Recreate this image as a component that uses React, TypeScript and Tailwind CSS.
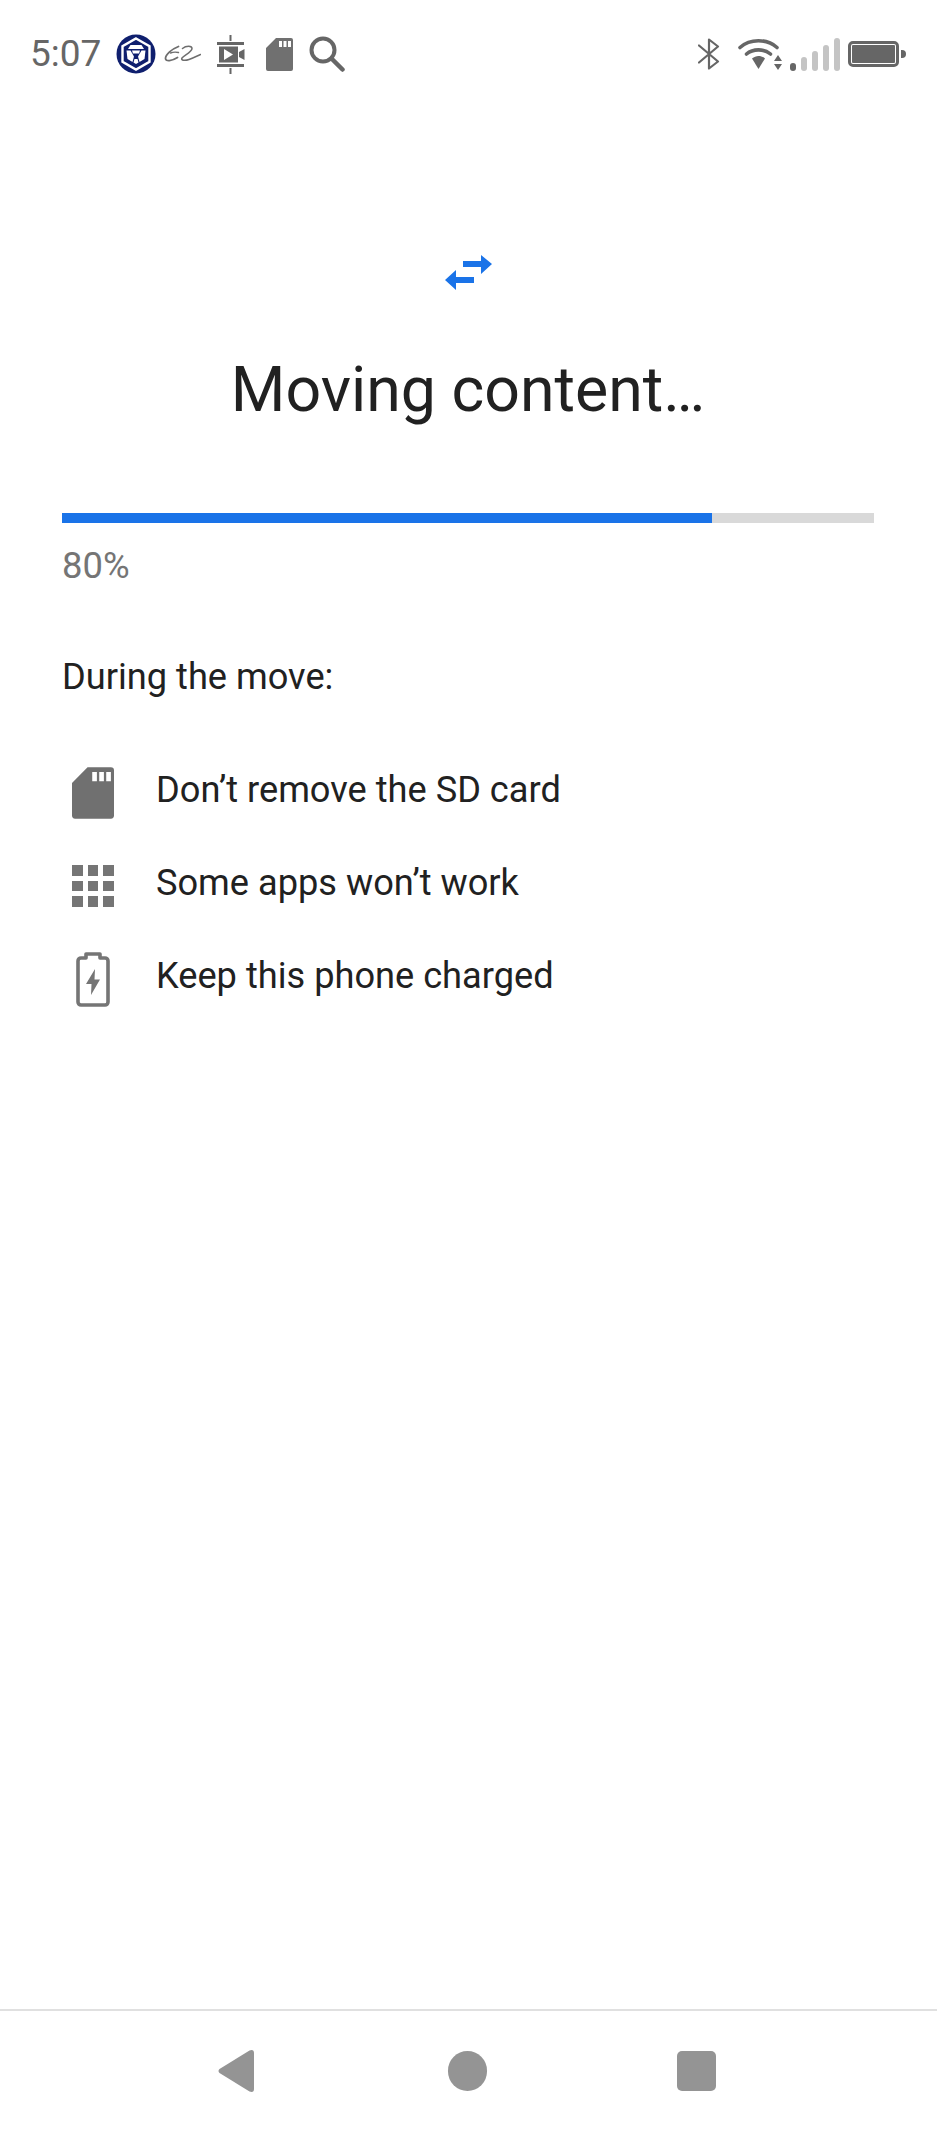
import React from 'react';

const CryptoIcon = () => (
    <svg width="40" height="40" viewBox="0 0 40 40" className="ml-[15px]">
        <circle cx="20" cy="20" r="19.5" fill="#0f1f6e" />
        <path d="M20 4.5 L33.5 12.2 V27.8 L20 35.5 L6.5 27.8 V12.2 Z" fill="none" stroke="#fff" strokeWidth="2.4" />
        <path d="M14.5 11 H25.5 L28 15 H12 Z" fill="#fff" />
        <path d="M16 16.5 H24 L23 19.5 H17 Z" fill="#fff" />
        <path d="M10.5 16.5 H14.5 L18 22.5 L16.5 28 L11.5 25 Z" fill="#fff" />
        <path d="M29.5 16.5 H25.5 L22 22.5 L23.5 28 L28.5 25 Z" fill="#fff" />
        <path d="M18.5 25 H21.5 L22.5 28.5 L20 30 L17.5 28.5 Z" fill="#fff" />
    </svg>
);

const AlibabaIcon = () => (
    <svg width="37" height="18" viewBox="0 0 37 18" fill="none" stroke="#6e6e6e" className="ml-[8px]">
        <path d="M14.5 1.5 C8 4 1.5 9.5 1.5 13.5 C1.5 17 8 16 13.5 12.5" strokeWidth="1.8" strokeLinecap="round" />
        <path d="M6.5 8 C9 7 12 7 14.5 7.5" strokeWidth="1.4" strokeLinecap="round" />
        <path d="M18.5 3.5 C22 0.5 28 0.5 28 3.5 C28 7 20 10.5 18 13 C16.5 15.5 21 16 25 14.5 C29 13 33 11 36.5 9.5" strokeWidth="1.5" strokeLinecap="round" />
    </svg>
);

const VideoCompressIcon = () => (
    <svg width="28" height="40" viewBox="0 0 28 40" fill="#666" className="ml-[16px]">
        <rect x="0" y="8" width="27" height="3" />
        <rect x="0" y="30" width="27" height="3" />
        <rect x="12.5" y="1" width="2" height="6" />
        <rect x="12.5" y="34" width="2" height="6" />
        <path d="M2 12.5 H21 V28.5 H2 Z M7 15 V26 L16 20.5 Z" fillRule="evenodd" />
        <path d="M22 18 L27.5 15 V26 L22 23 Z" />
    </svg>
);

const SdCardIcon = ({ width, height, className }: { width: number; height: number; className?: string }) => (
    <svg width={width} height={height} viewBox="0 0 27 33" className={className}>
        <path
            d="M10 0 H25 A2 2 0 0 1 27 2 V31 A2 2 0 0 1 25 33 H2 A2 2 0 0 1 0 31 V10 Z M13 3 V9 H16 V3 Z M17.5 3 V9 H20.5 V3 Z M22 3 V9 H25 V3 Z"
            fill="#707070"
            fillRule="evenodd"
        />
    </svg>
);

const SearchIcon = () => (
    <svg width="36" height="36" viewBox="0 0 36 36" fill="none" stroke="#666" className="ml-[16px]">
        <circle cx="14" cy="14" r="11.5" strokeWidth="4" />
        <path d="M22.5 22.5 L33.5 33.5" strokeWidth="4.5" strokeLinecap="round" />
    </svg>
);

const BluetoothIcon = () => (
    <svg width="22" height="32" viewBox="0 0 22 32" fill="none" stroke="#666" strokeWidth="2.2">
        <path d="M1 7.5 L20 23.5 L11 30.5 V1.5 L20 8.5 L1 24.5" strokeLinejoin="round" strokeLinecap="round" />
    </svg>
);

const WifiIcon = () => (
    <svg width="44" height="33" viewBox="0 0 44 33" className="ml-[18px]">
        <g fill="none" stroke="#666" strokeWidth="3.6" strokeLinecap="round">
            <path d="M2 9.5 C12 0.5 29 0.5 39 9.5" />
            <path d="M8.5 16 C15 10.5 26 10.5 32.5 16" />
        </g>
        <path d="M14 20.5 C18 17 23 17 27 20.5 L20.5 31 Z" fill="#666" />
        <path d="M40 17 L44 23 H36 Z M36 26 H44 L40 32 Z" fill="#666" />
    </svg>
);

const SignalIcon = () => (
    <div className="ml-[8px] flex items-end gap-[5px] h-[33px]">
        <div className="w-[6px] h-[8px] rounded-full bg-[#666]" />
        <div className="w-[6px] h-[14px] rounded-full bg-[#c4c4c4]" />
        <div className="w-[6px] h-[20px] rounded-full bg-[#c4c4c4]" />
        <div className="w-[6px] h-[26px] rounded-full bg-[#c4c4c4]" />
        <div className="w-[6px] h-[33px] rounded-full bg-[#c4c4c4]" />
    </div>
);

const BatteryIcon = () => (
    <div className="ml-[8px] flex items-center">
        <div className="w-[51px] h-[26px] rounded-[5px] border-[3px] border-[#666] p-[1px]">
            <div className="w-full h-full bg-[#666] rounded-[1px]" />
        </div>
        <div className="ml-[2px] w-[5px] h-[8px] bg-[#666] rounded-r-full" />
    </div>
);

const SwapIcon = () => (
    <svg width="47" height="36" viewBox="0 0 47 36" fill="#1a73e8">
        <path d="M18 7 H36 V1 L47 10 L36 20 V13 H18 Z" />
        <path d="M29 23 H11 V16 L0 26 L11 36 V29 H29 Z" />
    </svg>
);

const GridIcon = () => (
    <div className="grid grid-cols-3 gap-[5px] w-[42px]">
        {Array.from({ length: 9 }).map((_, i) => (
            <div key={i} className="h-[10.6px] bg-[#757575]" />
        ))}
    </div>
);

const BatteryChargingIcon = () => (
    <svg width="34" height="55" viewBox="0 0 34 55">
        <path
            d="M10 2 H24 V6 H29 A3 3 0 0 1 32 9 V50 A3 3 0 0 1 29 53 H5 A3 3 0 0 1 2 50 V9 A3 3 0 0 1 5 6 H10 Z"
            fill="none"
            stroke="#757575"
            strokeWidth="3.6"
            strokeLinejoin="round"
        />
        <path d="M19 17 L10 32 H15.5 L15 43 L24 27.5 H18.5 Z" fill="#757575" />
    </svg>
);

const items = [
    { icon: <SdCardIcon width={42} height={52} />, label: 'Don’t remove the SD card', rowClass: 'h-[52px]' },
    { icon: <GridIcon />, label: 'Some apps won’t work', rowClass: 'h-[52px] mt-[41px]' },
    { icon: <BatteryChargingIcon />, label: 'Keep this phone charged', rowClass: 'h-[52px] mt-[41px]' },
];

export default function App() {
    return (
        <div className="w-[937px] h-[2134px] bg-white flex flex-col font-['Roboto',sans-serif] overflow-hidden">
            {/* Status bar */}
            <div className="h-[76px] pt-[34px] pl-[30px] pr-[31px] flex items-start justify-between">
                <div className="flex items-center h-[40px]">
                    <span className="text-[37px] leading-[40px] text-[#666]">5:07</span>
                    <CryptoIcon />
                    <AlibabaIcon />
                    <VideoCompressIcon />
                    <SdCardIcon width={27} height={33} className="ml-[21px]" />
                    <SearchIcon />
                </div>
                <div className="flex items-center h-[40px]">
                    <BluetoothIcon />
                    <WifiIcon />
                    <SignalIcon />
                    <BatteryIcon />
                </div>
            </div>

            {/* Content */}
            <div className="flex-1 flex flex-col pl-[62px] pr-[63px]">
                <div className="flex justify-center mt-[178px]">
                    <SwapIcon />
                </div>
                <h1 className="mt-[63px] text-center text-[62.6px] leading-[74px] font-normal text-[#212121]">
                    Moving content…
                </h1>
                <div className="mt-[86px] h-[10px] bg-[#d9d9d9]">
                    <div className="h-full w-[80%] bg-[#1a73e8]" />
                </div>
                <p className="mt-[22px] text-[36.4px] leading-[42px] text-[#757575]">80%</p>
                <p className="mt-[69px] text-[36.2px] leading-[42px] text-[#212121]">During the move:</p>
                <div className="mt-[69px] flex flex-col">
                    {items.map((item) => (
                        <div key={item.label} className={`flex items-center ${item.rowClass}`}>
                            <div className="w-[94px] pl-[10px] flex justify-start items-center">
                                <div className="w-[42px] flex justify-center">{item.icon}</div>
                            </div>
                            <span className="text-[36.2px] leading-[42px] text-[#212121] -mt-[6px]">{item.label}</span>
                        </div>
                    ))}
                </div>
            </div>

            {/* Navigation bar */}
            <div className="h-[125px] border-t-[2px] border-[#e0e0e0] flex items-start pt-[39px] pl-[218px]">
                <svg width="36" height="42" viewBox="0 0 36 42" fill="#949494">
                    <path d="M31.5 0.5 Q36 -1 36 3 V39 Q36 43 31.5 41.5 L1.5 23 Q-0.5 21 1.5 19 Z" />
                </svg>
                <div className="ml-[194px] mt-[1px] w-[39px] h-[40px] rounded-full bg-[#949494]" />
                <div className="ml-[190px] mt-[1px] w-[39px] h-[40px] rounded-[5px] bg-[#949494]" />
            </div>
        </div>
    );
}
